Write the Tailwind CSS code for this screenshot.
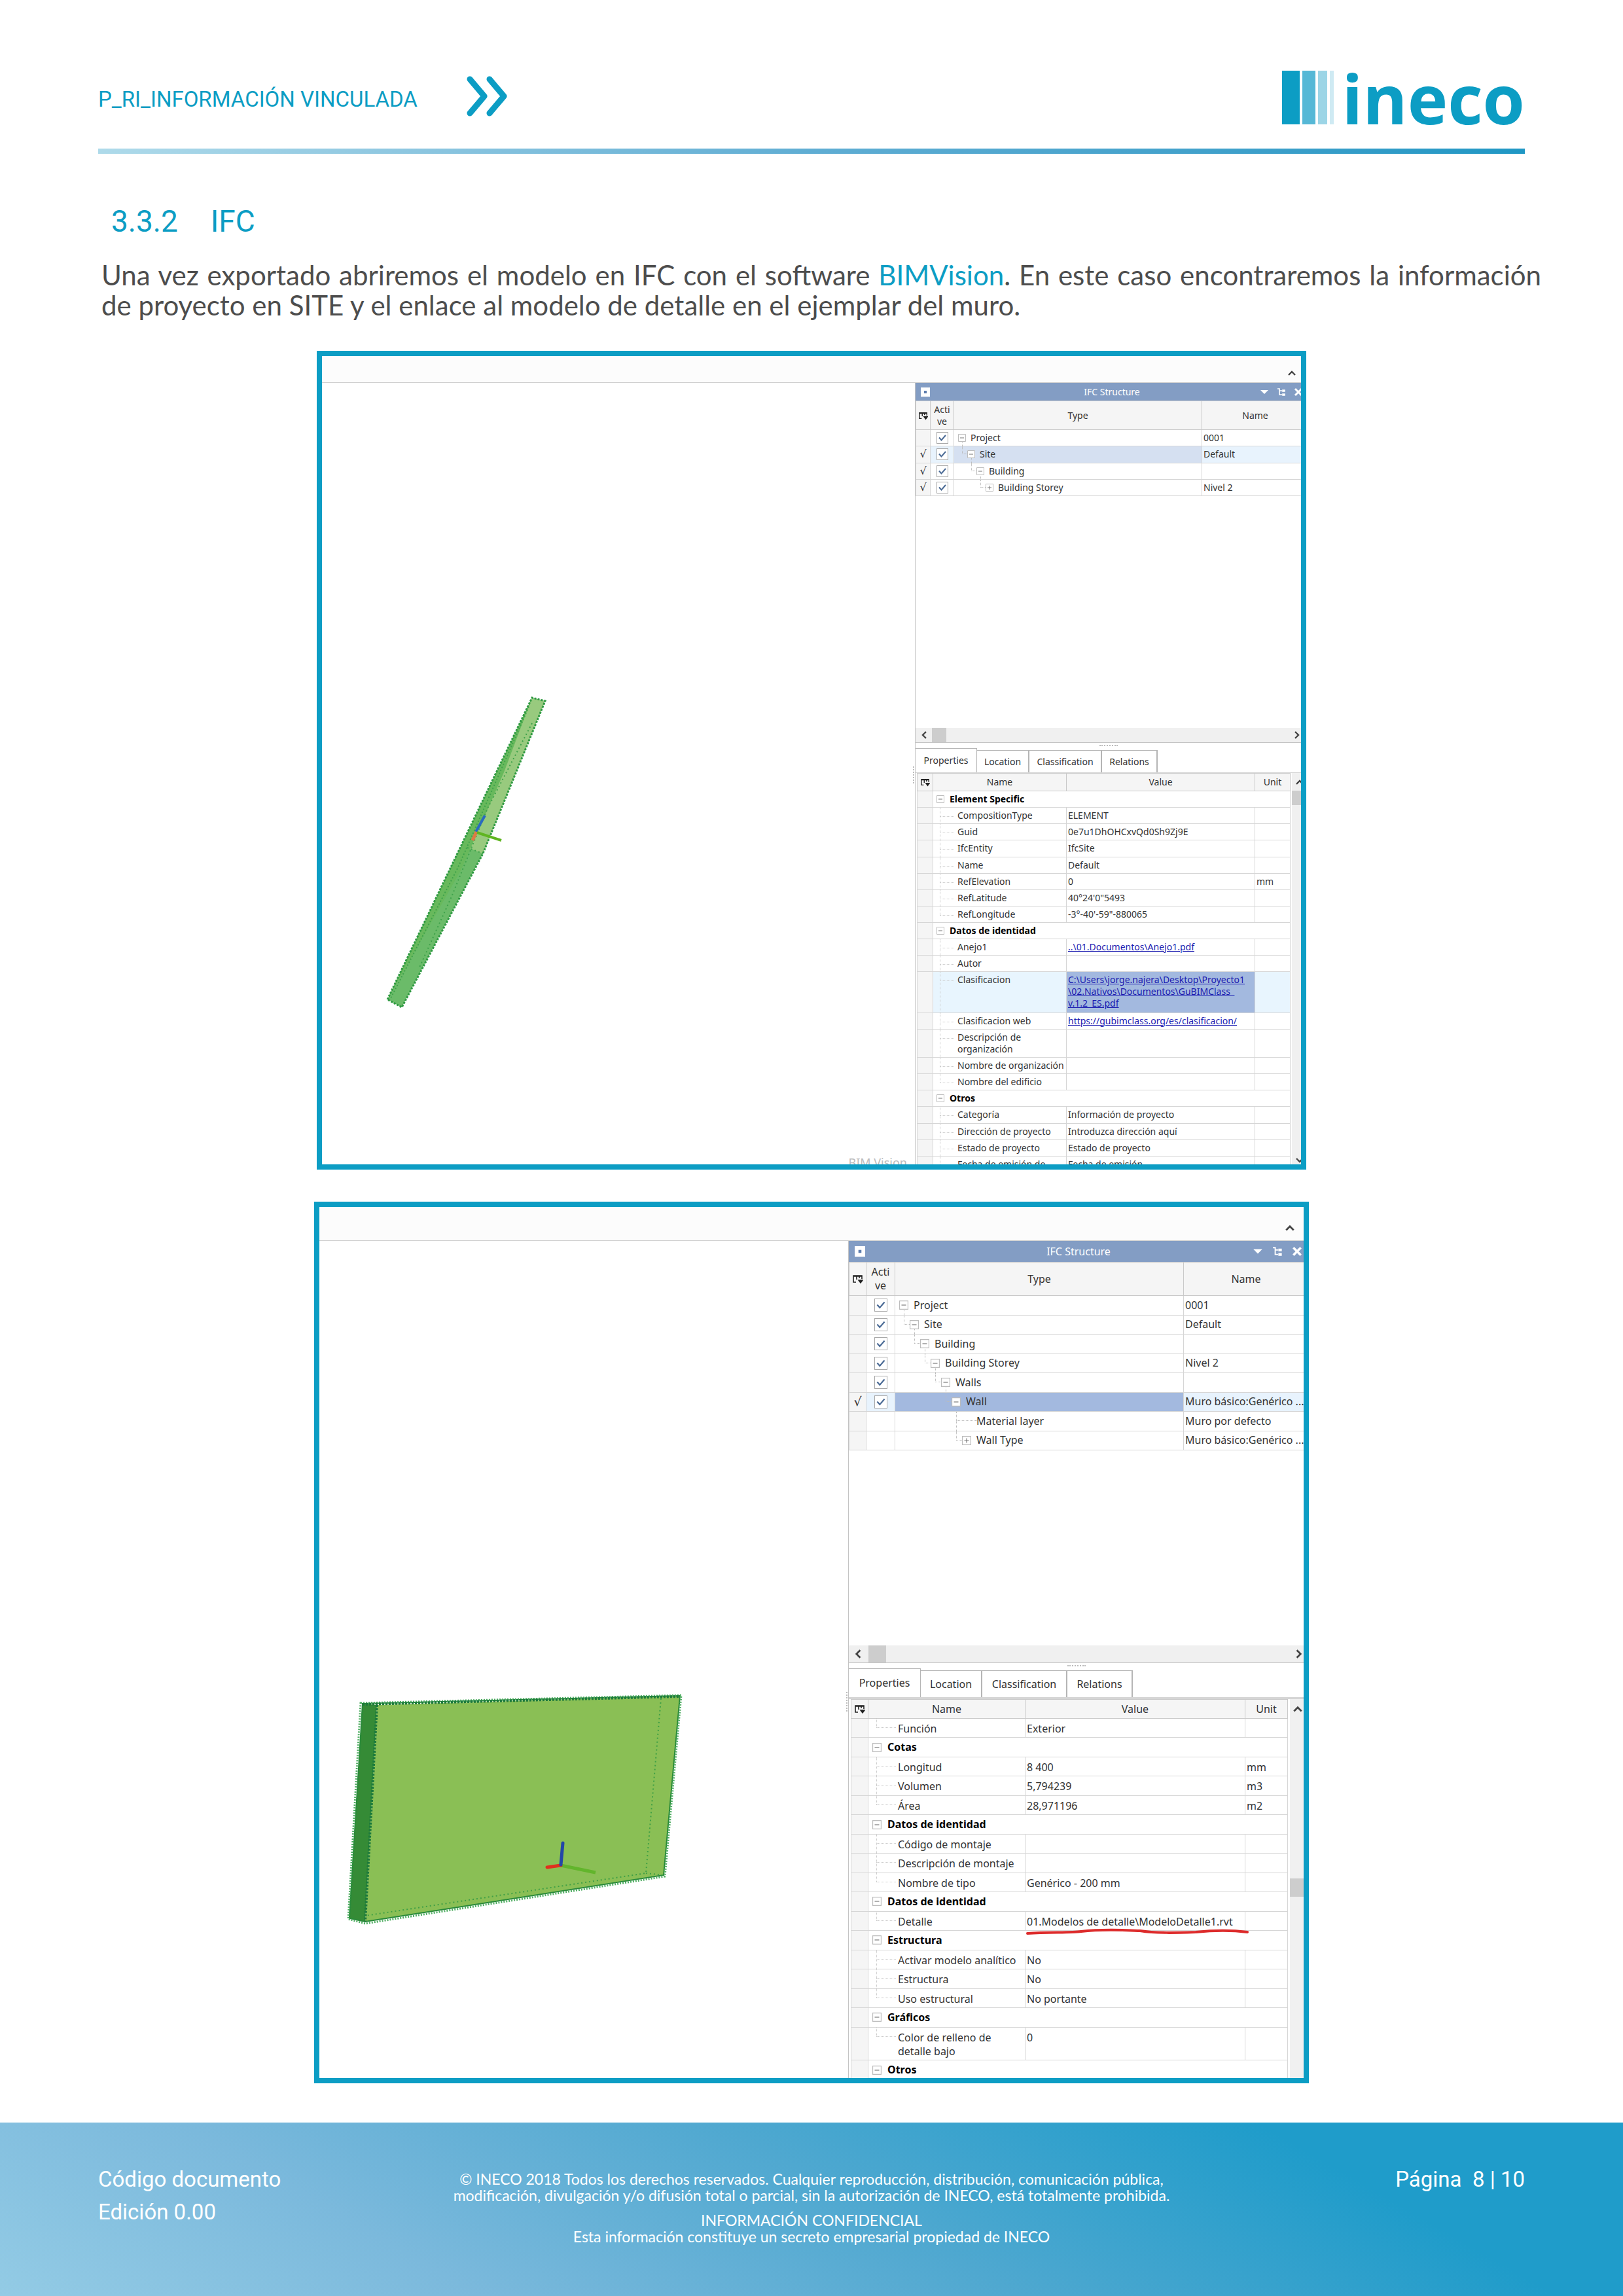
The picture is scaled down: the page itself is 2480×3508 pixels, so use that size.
<!DOCTYPE html>
<html lang="es">
<head>
<meta charset="utf-8">
<title>P_RI_Información vinculada</title>
<script src="https://cdn.jsdelivr.net/npm/@tailwindcss/browser@4"></script>
</head>
<body class="flex min-h-screen flex-col bg-white font-['Lato',sans-serif] text-[#4d4d4d]">

<header class="px-[150px] pt-[98px]">
  <div class="flex h-[129px] items-start justify-between">
    <div class="flex items-start">
      <p class="mt-[26px] w-[563px] font-['Roboto',sans-serif] text-[33px] leading-[56px] whitespace-nowrap text-[#0c9dc4]">P_RI_INFORMACIÓN VINCULADA</p>
      <svg class="mt-[18px] h-[62px] w-[62px]" viewBox="0 0 62 62" fill="none" stroke="#0c9dc4" stroke-width="9" stroke-linecap="round" stroke-linejoin="round" aria-hidden="true"><path d="M5 5 27 31 5 57M35 5 57 31 35 57"/></svg>
    </div>
    <div class="flex items-start" aria-label="ineco">
      <div class="mt-[10px] mr-[13px] flex h-[82px] gap-[4px]">
        <span class="w-[27px] bg-[#0c9dc4]"></span><span class="w-[20px] bg-[#56b8d6]"></span><span class="w-[14px] bg-[#9cd5e6]"></span><span class="w-[6px] bg-[#cfeaf3]"></span>
      </div>
      <span class="font-['Open_Sans',sans-serif] text-[104px] leading-[104px] font-bold text-[#0c9dc4]">ineco</span>
    </div>
  </div>
  <div class="h-[8px] bg-linear-to-r from-[#aedaea] via-[#5fadd3] to-[#1f97c4]"></div>
</header>

<main class="flex-1">
  <h1 class="flex gap-[50px] pt-[70px] pl-[170px] font-['Roboto',sans-serif] text-[46px] leading-[66px] text-[#0c9dc4]"><span>3.3.2</span><span>IFC</span></h1>
  <p class="mt-[26px] mr-[125px] ml-[155px] text-justify text-[42px] leading-[46px]">Una vez exportado abriremos el modelo en IFC con el software <a href="#" class="text-[#0c9dc4]">BIMVision</a>. En este caso encontraremos la información de&nbsp;proyecto en SITE y el enlace al modelo de detalle en el ejemplar del muro.</p>
  <div id="figures" class="mt-[47px] flex flex-col items-center gap-[49px]"></div>
</main>

<footer class="mt-[60px] flex h-[265px] justify-between bg-[linear-gradient(30deg,#93cbe5_0%,#7bb9dc_25%,#4fa8d0_53%,#1f9cca_81%)] px-[150px] pt-[62px] text-white">
  <p class="w-[400px] font-['Roboto',sans-serif] text-[33px] leading-[50px]">Código documento<br>Edición 0.00</p>
  <div class="pt-[12px] text-center text-[23px] leading-[25px]">
    <p>© INECO 2018 Todos los derechos reservados. Cualquier reproducción, distribución, comunicación pública,<br>modificación, divulgación y/o difusión total o parcial, sin la autorización de INECO, está totalmente prohibida.</p>
    <p class="mt-[13px]">INFORMACIÓN CONFIDENCIAL<br>Esta información constituye un secreto empresarial propiedad de INECO</p>
  </div>
  <p class="w-[400px] text-right font-['Roboto',sans-serif] text-[33px] leading-[50px]">Página&nbsp; 8 | 10</p>
</footer>

<script>
const small = {
  figure: 'w-full max-w-[1512px] h-[1251px]', text: 'text-[14px] leading-[18px]', top: 'h-[41px] pr-[7px]', chev: 'size-[14px]',
  panel: 'w-[590px]', inner: 'w-[600px]', title: 'h-[27px] px-[8px]', ico: 'size-[14px]', icoGap: 'gap-[12px]', side: 'w-[80px]',
  area: 'h-[500px]', cols: [22, 36, 379, 163], head: 'h-[44px]', row: 'h-[25px]', box: 'size-[12px]', check: 'size-[18px]', tree: 6, indent: 14, boxW: 12, gap: 'ml-[7px]',
  bar: 'h-[23px] w-[590px]', thumb: 'ml-[5px] w-[22px]', barPad: 'pl-[6px]', grip: 'h-[8px]', tabs: 'h-[37px]',
  tabW: ['w-[94px]', 'w-[80px]', 'w-[111px]', 'w-[85px]'], rule: 'h-px', left: 'ml-[2px]', props: 'w-[570px]', pcols: [24, 204, 288, 54], phead: 'h-[27px]',
  group: 'pl-[5px] gap-[8px]', guide: 'left-[10px]', guideW: 'w-[22px]', namePad: 'pl-[37px]', cell: 'pt-[3px]', mark: 'text-[16px]',
  scroll: 'ml-[2px]', sThumb: 'h-[22px]', sHead: 'h-[27px]', sUp: 'ml-[5px]', end: true,
};
const large = {
  figure: 'w-full max-w-[1520px] h-[1347px]', text: 'text-[16px] leading-[21px]', top: 'h-[52px] pr-[13px]', chev: 'size-[16px]',
  panel: 'w-[696px]', inner: 'w-[702px]', title: 'h-[32px] px-[9px]', ico: 'size-[16px]', icoGap: 'gap-[14px]', side: 'w-[90px]',
  area: 'h-[586px]', cols: [26, 44, 441, 191], head: 'h-[51px]', row: 'h-[29px]', box: 'size-[14px]', check: 'size-[20px]', tree: 6, indent: 16, boxW: 14, gap: 'ml-[8px]',
  bar: 'h-[27px] w-[696px]', thumb: 'ml-[8px] w-[27px]', barPad: 'pl-[6px]', grip: 'h-[8px]', tabs: 'h-[44px]',
  tabW: ['w-[110px]', 'w-[94px]', 'w-[130px]', 'w-[100px]'], rule: 'h-[3px]', left: 'ml-[3px]', props: 'w-[667px]', pcols: [26, 240, 336, 65], phead: 'h-[29px]',
  group: 'pl-[6px] gap-[9px]', guide: 'left-[12px]', guideW: 'w-[30px]', namePad: 'pl-[45px]', cell: 'pt-[5px]', mark: 'text-[19px]',
  scroll: 'ml-[3px]', sThumb: 'mt-[245px] h-[28px]', sHead: 'h-[29px]', sUp: 'ml-[4px]', end: false,
};

const chevron = (cls, d) => `<svg class="${cls}" viewBox="0 0 14 14" fill="none" stroke="#444" stroke-width="2.4" aria-hidden="true"><path d="${d}"/></svg>`;
const UP = 'M2 10 7 5 12 10', DOWN = 'M2 4 7 9 12 4', LEFT = 'M10 2 5 7 10 12', RIGHT = 'M4 2 9 7 4 12';
const expander = (s, sign) => `<svg class="relative shrink-0 ${s.box} bg-white" viewBox="0 0 12 12" fill="none" aria-hidden="true"><path d="M.5.5h11v11H.5z" stroke="#bdbdbd"/><path d="M3 6h6${sign === '+' ? 'M6 3v6' : ''}" stroke="#777"/></svg>`;
const picker = s => `<svg class="mx-auto ${s.ico}" viewBox="0 0 16 16" fill="none" stroke="#222" stroke-width="1.6" aria-hidden="true"><path d="M5 13H1V3h13v5M1 4h13M6 4v5M10 4v3"/><path d="M9 10h6L12 14z" fill="#222"/></svg>`;
const colgroup = c => `<colgroup>${c.map(w => `<col style="width:${w}px">`).join('')}</colgroup>`;

function treeRow(s, r) {
  const left = s.tree + r.depth * s.indent;
  const mid = left - s.indent + s.boxW / 2;
  const mark = r.mark ? '√' : '';
  const guide = r.depth ? `<span class="absolute top-0 h-1/2 border-b border-l border-dotted border-[#bbb]" style="left:${mid}px;width:${r.box ? s.indent - s.boxW / 2 : s.indent * 2}px"></span>` : '';
  const down = r.more ? `<span class="absolute bottom-0 h-1/2 border-l border-dotted border-[#bbb]" style="left:${r.more === 'side' ? mid : left + s.boxW / 2}px"></span>` : '';
  return `<tr class="${s.row}">
    <td class="border border-[#d6d6d6] bg-[#f5f5f5] text-center font-['DejaVu_Sans',sans-serif] leading-none ${s.mark}">${mark}</td>
    <td class="border border-[#d6d6d6] ${r.sel ? 'bg-[#e8f3fd]' : ''}">${r.check ? `<label class="relative mx-auto block ${s.check}"><input type="checkbox" checked aria-label="Active ${r.name}" class="block appearance-none border border-[#a8a8a8] bg-white ${s.check}"><svg class="absolute inset-0" viewBox="0 0 18 18" fill="none" stroke="#4a6a95" stroke-width="2" aria-hidden="true"><path d="M4 8.5 7.5 12.5 14 5"/></svg></label>` : ''}</td>
    <td class="relative border border-[#d6d6d6] ${r.sel || ''}">${guide}${down}<span class="flex items-center" style="padding-left:${left}px">${r.box ? expander(s, r.box) : `<span class="${s.box}"></span>`}<span class="relative ${s.gap}">${r.name}</span></span></td>
    <td class="overflow-hidden border border-[#d6d6d6] pl-[2px] whitespace-nowrap ${r.sel ? 'bg-[#e8f3fd]' : ''}">${r.value || ''}</td>
  </tr>`;
}

function propRow(s, r) {
  const head = `<td class="border border-[#d6d6d6] bg-[#f5f5f5]"></td>`;
  if (r.group) return `<tr class="${s.row}">${head}<td colspan="3" class="border border-[#d6d6d6] font-bold text-black"><span class="flex items-center ${s.group}">${expander(s, '-')}${r.group}</span></td></tr>`;
  const h = r.h || s.row;
  return `<tr class="${h}">${head}
    <td class="relative border border-[#d6d6d6] align-top whitespace-nowrap ${s.namePad} ${s.cell} ${r.sel ? 'bg-[#e8f5fe]' : ''}"><span class="absolute top-0 ${s.guide} ${r.last ? 'h-[13px]' : 'h-full'} border-l border-dotted border-[#ccc]"></span><span class="absolute top-[13px] ${s.guide} ${s.guideW} border-t border-dotted border-[#ccc]"></span>${r.name}</td>
    <td class="relative border border-[#d6d6d6] pl-[2px] align-top whitespace-nowrap ${s.cell} ${r.sel ? 'bg-[#a3b9df]' : ''}">${r.link ? `<a href="#" class="text-[#1a1ab0] underline">${r.link}</a>` : r.value || ''}${r.note || ''}</td>
    <td class="border border-[#d6d6d6] pl-[2px] align-top ${s.cell} ${r.sel ? 'bg-[#e8f5fe]' : ''}">${r.unit || ''}</td></tr>`;
}

function windowFigure(s, d) {
  const th = 'border border-[#c9c9c9] bg-[#f5f5f5] font-normal';
  return `<figure class="flex flex-col overflow-hidden border-8 border-[#0c9dc4] bg-white font-['Noto_Sans',sans-serif] text-[#333] ${s.figure} ${s.text}">
    <div class="flex shrink-0 items-center justify-end border-b border-[#cfcfcf] bg-[#fcfcfc] pt-[12px] ${s.top}">${chevron(s.chev, UP)}</div>
    <div class="flex min-h-0 flex-1">
      <div class="relative min-w-0 flex-1 overflow-hidden">${d.scene}</div>
      <section class="shrink-0 overflow-hidden border-l border-[#c4c4c4] ${s.panel}">
        <div class="${s.inner}">
          <div class="flex items-center justify-between bg-[#839dc4] text-white ${s.title}">
            <span class="${s.side}"><svg class="${s.ico}" viewBox="0 0 14 14" aria-hidden="true"><path d="M0 0h14v14H0z" fill="#fff"/><path d="M5 5h4v4H5z" fill="#5d7dae"/></svg></span>
            <h2>IFC Structure</h2>
            <span class="flex justify-end ${s.icoGap} ${s.side}">
              <button aria-label="Menu"><svg class="${s.ico}" viewBox="0 0 14 14" fill="#fff"><path d="M1 4h12L7 10z"/></svg></button>
              <button aria-label="Tree"><svg class="${s.ico}" viewBox="0 0 14 14" fill="none" stroke="#fff" stroke-width="1.6"><path d="M1 2h3v9h4M4 5h4"/><path d="M9 4h3v2H9zM9 10h3v2H9z" fill="#fff"/></svg></button>
              <button aria-label="Close"><svg class="${s.ico}" viewBox="0 0 14 14" fill="none" stroke="#fff" stroke-width="3"><path d="M2 2 12 12M12 2 2 12"/></svg></button>
            </span>
          </div>
          <div class="${s.area}">
            <table class="w-full table-fixed border-collapse ${d.treeHeight}">${colgroup(s.cols)}
              <thead><tr class="${s.head}"><th class="${th}">${picker(s)}</th><th class="${th}">Acti<br>ve</th><th class="${th}">Type</th><th class="${th}">Name</th></tr></thead>
              <tbody>${d.tree.map(r => treeRow(s, r)).join('')}</tbody>
            </table>
          </div>
          <div class="flex items-center border-b border-[#c4c4c4] bg-[#f0f0f0] ${s.bar} ${s.barPad}">
            ${chevron(s.ico, LEFT)}<span class="h-full bg-[#cdcdcd] ${s.thumb}"></span><span class="flex-1"></span>${chevron(s.ico, RIGHT)}
          </div>
        </div>
        <div class="flex items-center justify-center ${s.grip}"><span class="w-[28px] border-t-2 border-dotted border-[#bbb]"></span></div>
        <div class="flex items-end ${s.tabs}" role="tablist">
          <button role="tab" aria-selected="true" class="h-full border-t border-r border-[#b5b5b5] ${s.tabW[0]}">Properties</button>
          ${['Location', 'Classification', 'Relations'].map((t, i) => `<button role="tab" class="mt-[3px] self-stretch border-t border-r-2 border-[#b5b5b5] ${s.tabW[i + 1]}">${t}</button>`).join('')}
        </div>
        <div class="bg-[#d5d5d5] ${s.rule}"></div>
        <div class="flex">
          <table class="shrink-0 table-fixed border-collapse self-start ${s.left} ${s.props} ${d.propHeight}">${colgroup(s.pcols)}
            <thead><tr class="${s.phead}"><th class="${th}">${picker(s)}</th><th class="${th}">Name</th><th class="${th}">Value</th><th class="${th}">Unit</th></tr></thead>
            <tbody>${d.props.map(r => propRow(s, r)).join('')}</tbody>
          </table>
          <div class="flex-1 bg-[#f0f0f0] ${s.scroll}">
            <div class="flex items-center ${s.sHead} ${s.sUp}">${chevron(s.chev, UP)}</div>
            <div class="bg-[#cdcdcd] ${s.sThumb}"></div>
            ${s.end ? `<div class="mt-[536px] ${s.sUp}">${chevron(s.chev, DOWN)}</div>` : ''}
          </div>
        </div>
      </section>
    </div>
  </figure>`;
}

const SEL_SOFT = 'bg-[#d5e0f1]', SEL = 'bg-[#a3b9df]';

const first = {
  treeHeight: 'h-[146px]', propHeight: 'h-[629px]',
  scene: `<svg class="absolute top-0 left-0 h-[1194px] w-[906px]" viewBox="492 585 906 1194" fill="none" role="img" aria-label="Muro visto de canto">
    <path d="M813 1066 833 1071 738 1304 614 1539 592 1527Z" fill="#6bbb69"/>
    <path d="M813 1067 833 1071 738 1304 714 1295 760 1190Z" fill="#98ca7e"/>
    <path d="M813 1066 592 1527 704 1330 770 1180Z" fill="#68b95c"/>
    <path d="M592 1527 813 1066 833 1071 738 1304 614 1539Z" stroke="#2f9a42" stroke-width="3" stroke-dasharray="3 2"/>
    <path d="M808 1080 700 1325 597 1525" stroke="#3fa24b" stroke-width="2" stroke-dasharray="2 3"/>
    <path d="M813 1105 745 1235 690 1370 640 1480M714 1295 738 1304" stroke="#3fa24b" stroke-width="2" stroke-dasharray="2 4"/>
    <path d="M727 1271 741 1246" stroke="#2a6bc0" stroke-width="4"/><path d="M728 1271 722 1284" stroke="#dd7a45" stroke-width="5"/><path d="M729 1272 766 1284" stroke="#5fb520" stroke-width="4"/>
  </svg>
  <span class="absolute right-[12px] -bottom-[9px] text-[18px] leading-[24px] text-[#bcbcbc]">BIM Vision</span>
  <span class="absolute right-px bottom-[582px] h-[26px] border-l-2 border-dotted border-[#bbb]"></span>`,
  tree: [
    { name: 'Project', value: '0001', depth: 0, box: '-', check: true, more: 'own' },
    { name: 'Site', value: 'Default', depth: 1, box: '-', check: true, mark: true, sel: SEL_SOFT, more: 'own' },
    { name: 'Building', depth: 2, box: '-', check: true, mark: true, more: 'own' },
    { name: 'Building Storey', value: 'Nivel 2', depth: 3, box: '+', check: true, mark: true },
  ],
  props: [
    { group: 'Element Specific' },
    { name: 'CompositionType', value: 'ELEMENT' }, { name: 'Guid', value: '0e7u1DhOHCxvQd0Sh9Zj9E' }, { name: 'IfcEntity', value: 'IfcSite' },
    { name: 'Name', value: 'Default' }, { name: 'RefElevation', value: '0', unit: 'mm' }, { name: 'RefLatitude', value: '40°24\'0"5493' },
    { name: 'RefLongitude', value: '-3°-40\'-59"-880065', last: true },
    { group: 'Datos de identidad' },
    { name: 'Anejo1', link: '..\\01.Documentos\\Anejo1.pdf' }, { name: 'Autor' },
    { name: 'Clasificacion', link: 'C:\\Users\\jorge.najera\\Desktop\\Proyecto1<br>\\02.Nativos\\Documentos\\GuBIMClass_<br>v.1.2_ES.pdf', h: 'h-[62px]', sel: true },
    { name: 'Clasificacion web', link: 'https://gubimclass.org/es/clasificacion/' },
    { name: 'Descripción de<br>organización', h: 'h-[43px]' }, { name: 'Nombre de organización' }, { name: 'Nombre del edificio', last: true },
    { group: 'Otros' },
    { name: 'Categoría', value: 'Información de proyecto' }, { name: 'Dirección de proyecto', value: 'Introduzca dirección aquí' },
    { name: 'Estado de proyecto', value: 'Estado de proyecto' }, { name: 'Fecha de emisión de<br>proyecto', value: 'Fecha de emisión', h: 'h-[43px]' },
  ],
};

const second = {
  treeHeight: 'h-[288px]', propHeight: 'h-[582px]',
  scene: `<svg class="absolute top-0 left-0 h-[1279px] w-[808px]" viewBox="488 1896 808 1279" fill="none" role="img" aria-label="Muro en perspectiva">
    <path d="M576 2605 1039 2591 1014 2865 558 2936Z" fill="#8abf55"/>
    <path d="M554 2603 576 2605 558 2936 533 2931Z" fill="#358b36"/>
    <path d="M554 2603 1039 2591 1014 2865 558 2936 534 2931Z" stroke="#2a8a3a" stroke-width="2"/>
    <path d="M551 2602 1041 2590 1016 2867 558 2939 532 2932Z" stroke="#4fae62" stroke-width="3" stroke-dasharray="2 2"/>
    <path d="M554 2604 1039 2592M576 2605 558 2936" stroke="#1c7a3c" stroke-width="4" stroke-dasharray="3 2"/>
    <path d="M1010 2595 987 2862 558 2927M987 2862 1014 2865" stroke="#3f9f45" stroke-width="2" stroke-dasharray="2 4"/>
    <path d="M857 2850 910 2861" stroke="#62b52c" stroke-width="5"/><path d="M857 2850 836 2853" stroke="#e0301e" stroke-width="5" stroke-linecap="round"/><path d="M857 2849 860 2816" stroke="#2446a8" stroke-width="5" stroke-linecap="round"/>
  </svg>
  <span class="absolute right-px bottom-[560px] h-[30px] border-l-2 border-dotted border-[#bbb]"></span>`,
  tree: [
    { name: 'Project', value: '0001', depth: 0, box: '-', check: true, more: 'own' },
    { name: 'Site', value: 'Default', depth: 1, box: '-', check: true, more: 'own' },
    { name: 'Building', depth: 2, box: '-', check: true, more: 'own' },
    { name: 'Building Storey', value: 'Nivel 2', depth: 3, box: '-', check: true, more: 'own' },
    { name: 'Walls', depth: 4, box: '-', check: true, more: 'own' },
    { name: 'Wall', value: 'Muro básico:Genérico ...', depth: 5, box: '-', check: true, mark: true, sel: SEL },
    { name: 'Material layer', value: 'Muro por defecto', depth: 6, more: 'side' },
    { name: 'Wall Type', value: 'Muro básico:Genérico ...', depth: 6, box: '+' },
  ],
  props: [
    { name: 'Función', value: 'Exterior', last: true },
    { group: 'Cotas' }, { name: 'Longitud', value: '8 400', unit: 'mm' }, { name: 'Volumen', value: '5,794239', unit: 'm3' }, { name: 'Área', value: '28,971196', unit: 'm2', last: true },
    { group: 'Datos de identidad' }, { name: 'Código de montaje' }, { name: 'Descripción de montaje' }, { name: 'Nombre de tipo', value: 'Genérico - 200 mm', last: true },
    { group: 'Datos de identidad' },
    { name: 'Detalle', value: '01.Modelos de detalle\\ModeloDetalle1.rvt', last: true,
      note: '<svg class="absolute top-[23px] left-0 z-10 h-[14px] w-[342px]" viewBox="0 0 342 14" fill="none" stroke="#dd2b2b" stroke-width="4" stroke-linecap="round" aria-hidden="true"><path d="M3 10C40 8 70 9 85 7 120 3 150 5 175 6 200 10 230 9 260 8 290 5 315 5 339 8"/></svg>' },
    { group: 'Estructura' }, { name: 'Activar modelo analítico', value: 'No' }, { name: 'Estructura', value: 'No' }, { name: 'Uso estructural', value: 'No portante', last: true },
    { group: 'Gráficos' }, { name: 'Color de relleno de<br>detalle bajo', value: '0', h: 'h-[50px]', last: true },
    { group: 'Otros' },
  ],
};

document.getElementById('figures').innerHTML = windowFigure(small, first) + windowFigure(large, second);
</script>
</body>
</html>
